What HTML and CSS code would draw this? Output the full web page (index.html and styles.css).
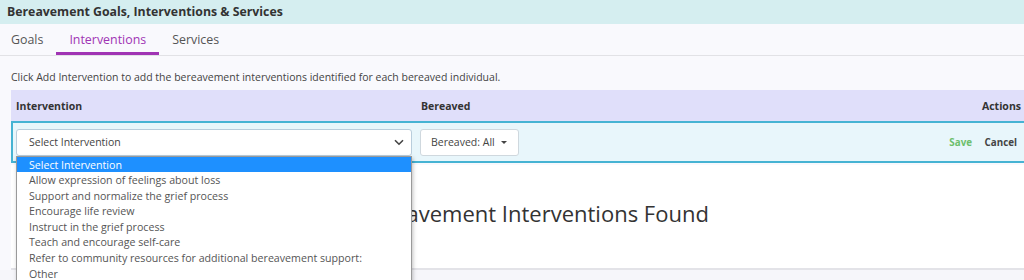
FILE: index.html
```html
<!DOCTYPE html>
<html lang="en">
<head>
    <meta charset="UTF-8">
    <title>Bereavement Goals, Interventions &amp; Services</title>
    <link rel="stylesheet" href="styles.css">
</head>
<body>
    <div class="title-bar">Bereavement Goals, Interventions &amp; Services</div>

    <div class="tabs">
        <div class="tab">Goals</div>
        <div class="tab active">Interventions</div>
        <div class="tab">Services</div>
    </div>

    <div class="panel">
        <p class="hint">Click Add Intervention to add the bereavement interventions identified for each bereaved individual.</p>

        <div class="grid">
            <div class="grid-head">
                <div class="col-intervention">Intervention</div>
                <div class="col-bereaved">Bereaved</div>
                <div class="col-actions">Actions</div>
            </div>

            <div class="edit-row">
                <div class="select-wrap">
                    <div class="select-box">
                        <span>Select Intervention</span>
                        <svg class="chevron" width="10" height="7" viewBox="0 0 10 7">
                            <path d="M1 1.2 L5 5.2 L9 1.2" fill="none" stroke="#444" stroke-width="1.6"/>
                        </svg>
                    </div>
                    <ul class="options">
                        <li class="selected">Select Intervention</li>
                        <li>Allow expression of feelings about loss</li>
                        <li>Support and normalize the grief process</li>
                        <li>Encourage life review</li>
                        <li>Instruct in the grief process</li>
                        <li>Teach and encourage self-care</li>
                        <li>Refer to community resources for additional bereavement support:</li>
                        <li>Other</li>
                    </ul>
                </div>
                <div class="bereaved-btn">Bereaved: All <span class="caret"></span></div>
                <div class="row-actions">
                    <span class="save">Save</span>
                    <span class="cancel">Cancel</span>
                </div>
            </div>

            <div class="empty">No Bereavement Interventions Found</div>
        </div>
    </div>
</body>
</html>
```

FILE: styles.css
```css
body {
    margin: 0;
    min-height: 280px;
    font-family: "Open Sans", Arial, sans-serif;
    background-color: #f6f6fa;
    color: #444;
    overflow: hidden;
}
.title-bar {
    background-color: #d5eef0;
    height: 24px;
    line-height: 24px;
    padding-left: 7px;
    font-size: 12.3px;
    font-weight: bold;
    color: #333;
}
.tabs {
    display: flex;
    height: 31px;
    background-color: #f9f9fd;
    border-bottom: 1px solid #e2e2e6;
}
.tab {
    font-size: 12.4px;
    color: #555;
    padding: 7px 13px 0 13px;
}
.tab:first-child {
    padding-left: 11px;
}
.tab.active {
    color: #a034b4;
    border-bottom: 3px solid #a034b4;
}
.panel {
    padding-left: 11px;
    background-color: #f9f9fd;
}
.hint {
    margin: 0;
    padding: 14px 0 6px 0;
    font-size: 10.5px;
    color: #444;
}
.grid {
    position: relative;
}
.grid-head {
    display: flex;
    align-items: center;
    height: 31px;
    background-color: #e0dffa;
    font-size: 10.5px;
    font-weight: bold;
    color: #333;
}
.col-intervention {
    width: 405px;
    padding-left: 5px;
}
.col-bereaved {
    flex: 1;
}
.col-actions {
    padding-right: 3px;
}
.edit-row {
    display: flex;
    align-items: center;
    height: 38px;
    background-color: #e8f6fb;
    border: 2px solid #46b3d3;
    border-right: none;
    padding-left: 3px;
}
.select-wrap {
    position: relative;
}
.select-box {
    display: flex;
    align-items: center;
    justify-content: space-between;
    box-sizing: border-box;
    width: 396px;
    height: 27px;
    background-color: #fff;
    border: 1px solid #b9cddc;
    border-radius: 3px;
    padding: 0 7px 0 12px;
    font-size: 10.5px;
    color: #444;
}
.options {
    position: absolute;
    top: 27px;
    left: 0;
    width: 396px;
    margin: 0;
    padding: 0;
    list-style: none;
    background-color: #fff;
    box-sizing: border-box;
    border: 1px solid #9a9a9a;
    box-shadow: 1px 2px 4px rgba(0, 0, 0, 0.25);
    z-index: 10;
}
.options li {
    height: 15.6px;
    line-height: 16px;
    padding-left: 12px;
    font-size: 10.65px;
    color: #555;
}
.options li.selected {
    background-color: #1e90ff;
    color: #fff;
}
.bereaved-btn {
    display: flex;
    align-items: center;
    box-sizing: border-box;
    height: 27px;
    margin-left: 8px;
    padding: 0 11px 0 10px;
    background-color: #fff;
    border: 1px solid #cfd8de;
    border-radius: 3px;
    font-size: 10.5px;
    color: #444;
}
.caret {
    display: inline-block;
    margin-left: 6px;
    border-left: 3px solid transparent;
    border-right: 3px solid transparent;
    border-top: 3px solid #444;
}
.row-actions {
    margin-left: auto;
    padding-right: 7px;
    font-size: 9.8px;
    font-weight: bold;
}
.save {
    color: #6dbf6d;
    margin-right: 10px;
}
.cancel {
    color: #444;
}
.empty {
    margin-top: 2px;
    height: 103px;
    line-height: 96px;
    background-color: #fff;
    border-bottom: 2px solid #e3e3e8;
    text-align: center;
    font-size: 22px;
    color: #333;
    padding-right: 3px;
}
```
